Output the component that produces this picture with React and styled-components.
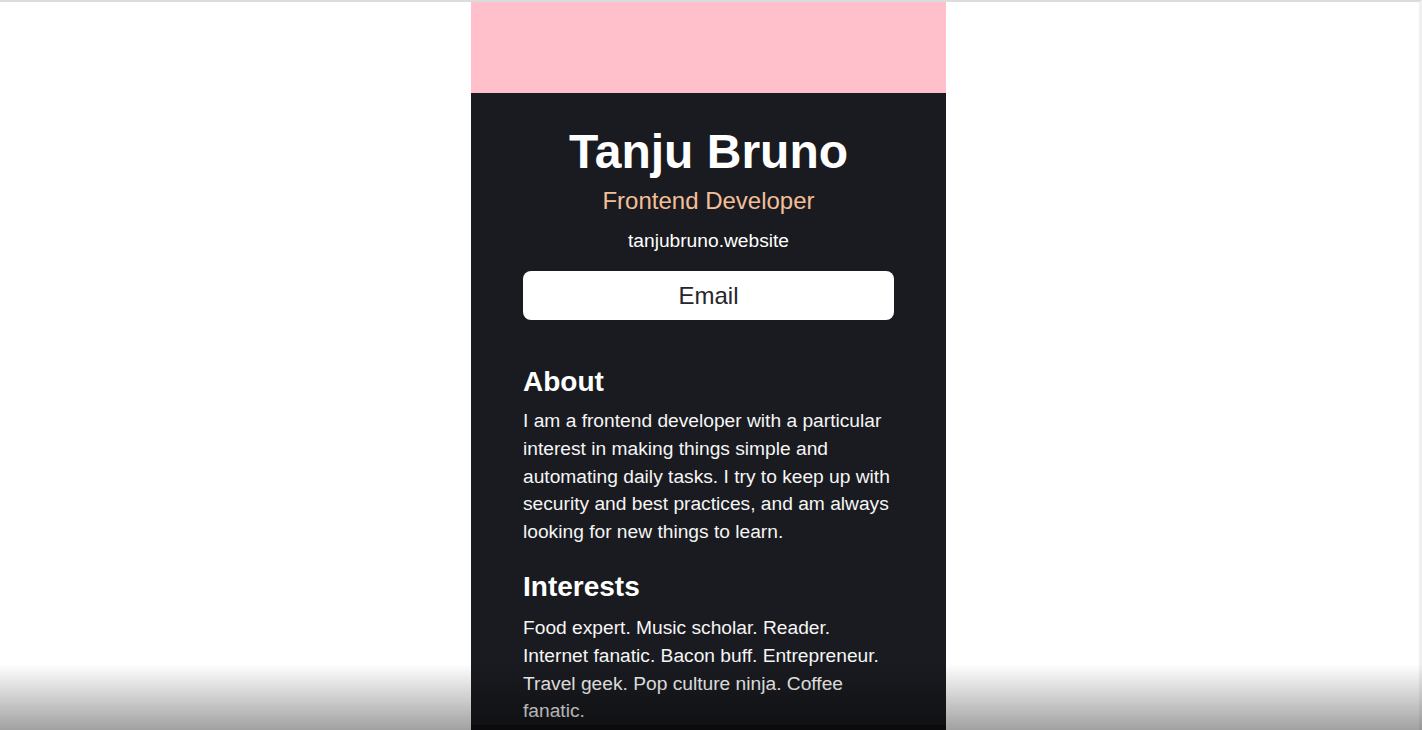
import React from 'react';
import styled, { createGlobalStyle } from 'styled-components';

const GlobalStyle = createGlobalStyle`
  html, body {
    margin: 0;
    padding: 0;
    background: #ffffff;
    font-family: "Liberation Sans", Arial, Helvetica, sans-serif;
  }
  * {
    box-sizing: border-box;
  }
`;

const Page = styled.div`
  min-height: 100vh;
  border-top: 2px solid #dcdcdc;
  border-right: 3px solid #f0f0f0;
  padding-right: 2px;
  display: flex;
  justify-content: center;
  align-items: flex-start;
`;

const Card = styled.main`
  width: 475px;
  background: #1a1b20;
  color: #ffffff;
  display: flex;
  flex-direction: column;
`;

const Banner = styled.div`
  height: 91px;
  background: #ffc0cb;
`;

const Info = styled.section`
  padding: 31px 52px 0;
  display: flex;
  flex-direction: column;
  align-items: center;
  text-align: center;
`;

const Name = styled.h1`
  margin: 0;
  font-size: 48px;
  font-weight: 700;
  line-height: 55px;
`;

const Role = styled.h3`
  margin: 8px 0 0;
  font-size: 24px;
  font-weight: 400;
  line-height: 28px;
  color: #f3bf99;
`;

const Site = styled.p`
  margin: 15px 0 0;
  font-size: 19.2px;
  line-height: 22px;
`;

const EmailButton = styled.a`
  margin-top: 19px;
  width: 100%;
  height: 49px;
  border-radius: 8px;
  background: #ffffff;
  color: #26262b;
  font-size: 24px;
  display: flex;
  align-items: center;
  justify-content: center;
  text-decoration: none;
`;

const Content = styled.div`
  padding: 46px 52px 0;
  display: flex;
  flex-direction: column;
  gap: 25px;
`;

const Section = styled.section`
  display: flex;
  flex-direction: column;
  gap: 9px;
`;

const Heading = styled.h2`
  margin: 0;
  font-size: 28px;
  font-weight: 700;
  line-height: 32px;
`;

const Text = styled.p`
  margin: ${(p) => (p.$loose ? '2px 0 0' : '0')};
  font-size: 19.2px;
  line-height: 27.8px;
  color: #f5f5f5;
`;

const Footer = styled.footer`
  height: 64px;
  background: #121215;
`;

const BottomFade = styled.div`
  position: fixed;
  left: 0;
  right: 0;
  bottom: 0;
  height: 66px;
  pointer-events: none;
  background: linear-gradient(to bottom, rgba(0, 0, 0, 0), rgba(0, 0, 0, 0.37));
`;

const App = () => {
  return (
    <>
      <GlobalStyle />
      <Page>
        <Card>
          <Banner />
          <Info>
            <Name>Tanju Bruno</Name>
            <Role>Frontend Developer</Role>
            <Site>tanjubruno.website</Site>
            <EmailButton href="mailto:tanju@example.com">Email</EmailButton>
          </Info>
          <Content>
            <Section>
              <Heading>About</Heading>
              <Text>
                I am a frontend developer with a particular interest in making things simple and
                automating daily tasks. I try to keep up with security and best practices, and am
                always looking for new things to learn.
              </Text>
            </Section>
            <Section>
              <Heading>Interests</Heading>
              <Text $loose>
                Food expert. Music scholar. Reader. Internet fanatic. Bacon buff. Entrepreneur.
                Travel geek. Pop culture ninja. Coffee fanatic.
              </Text>
            </Section>
          </Content>
          <Footer />
        </Card>
      </Page>
      <BottomFade />
    </>
  );
};

export default App;
